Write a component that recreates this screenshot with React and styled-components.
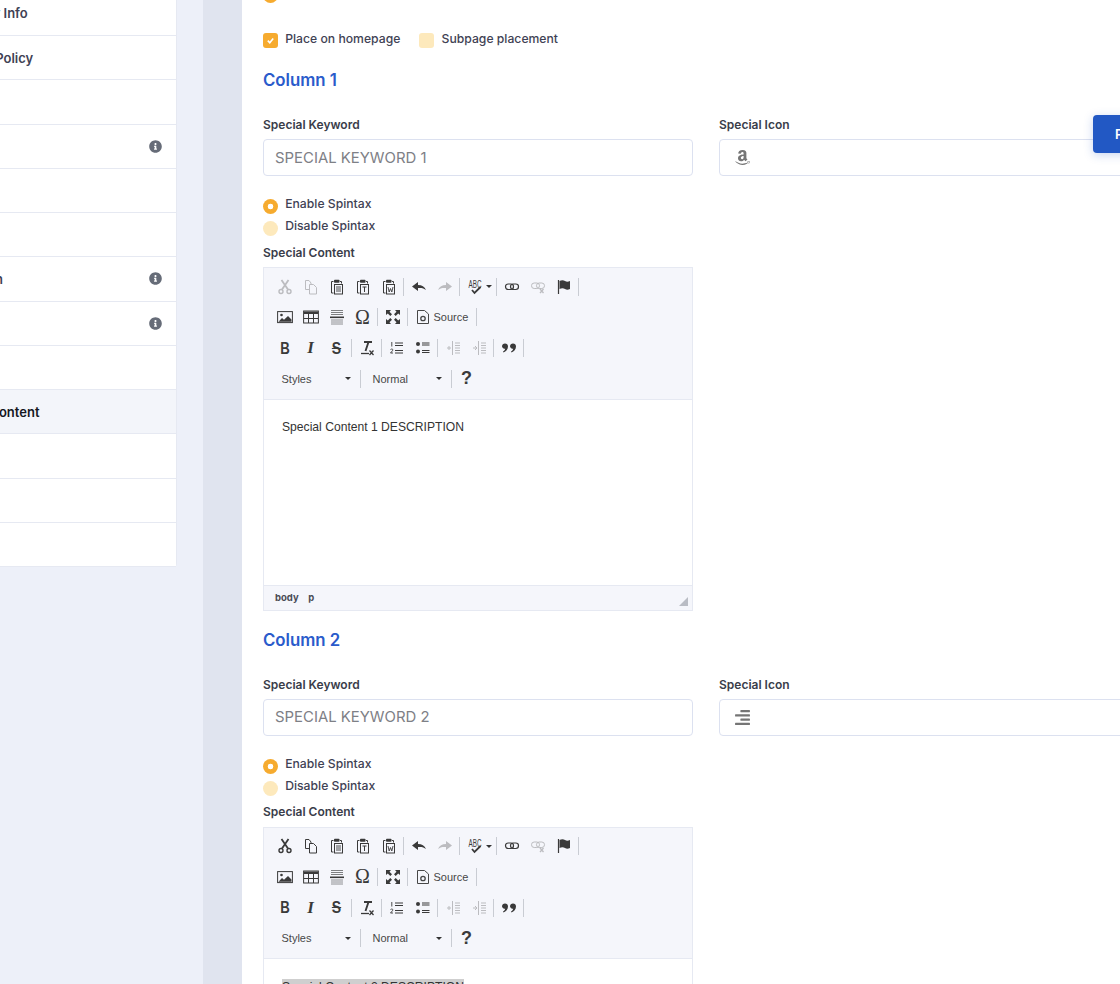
import React from 'react';
import styled, { createGlobalStyle } from 'styled-components';
import { FaAmazon, FaAlignRight, FaInfoCircle } from 'react-icons/fa';

const GlobalStyle = createGlobalStyle`
  html, body { margin: 0; padding: 0; background: #edf0f9; }
  body { font-family: Inter, "Noto Sans", sans-serif; }
  * { box-sizing: border-box; }
`;

const line = { fill: 'none', stroke: 'currentColor', strokeWidth: 1 };

const clipboard = (
  <>
    <path d="M4.500 2.500H2.500v11.500h2" {...line} />
    <path d="M11 2.500h1.500v2" {...line} />
    <rect x="5" y="0.800" width="5.500" height="3" rx="0.800" fill="currentColor" />
    <rect x="5.500" y="5.500" width="8" height="9.500" {...line} />
  </>
);

const ICONS = {
  cut: (
    <>
      <path d="M4.500 1 11 10.500M11.500 1 5 10.500" {...line} strokeWidth="1.800" />
      <circle cx="4" cy="12.500" r="2" {...line} strokeWidth="1.400" />
      <circle cx="12" cy="12.500" r="2" {...line} strokeWidth="1.400" />
    </>
  ),
  copy: (
    <>
      <path d="M6 10.500H2.500v-9h3.500l2 2.500v1" {...line} />
      <path d="M6.500 5.500h4l3 3v6.500h-7z" {...line} />
    </>
  ),
  paste: (
    <>
      {clipboard}
      <path d="M7 8h5M7 10h5M7 12h5" {...line} strokeWidth="0.900" />
    </>
  ),
  pasteText: (
    <>
      {clipboard}
      <path d="M7.500 8h4M9.500 8v5" {...line} />
    </>
  ),
  pasteWord: (
    <>
      {clipboard}
      <path d="M7 8l1.200 5 1.300-3.500L10.800 13 12 8" {...line} strokeWidth="0.900" />
    </>
  ),
  undo: <path d="M1 7.500 7 3v3c4 0 6.500 1.500 8 5-2-1.800-4.500-2.300-8-2v3z" fill="currentColor" />,
  redo: <path d="M15 7.500 9 3v3c-4 0-6.500 1.500-8 5 2-1.800 4.500-2.300 8-2v3z" fill="currentColor" />,
  link: (
    <>
      <rect x="1.500" y="5" width="8" height="5.500" rx="2.700" {...line} strokeWidth="1.200" />
      <rect x="6.500" y="5" width="8" height="5.500" rx="2.700" {...line} strokeWidth="1.200" />
    </>
  ),
  unlink: (
    <>
      <rect x="1.500" y="4" width="8" height="5.500" rx="2.700" {...line} />
      <rect x="6.500" y="4" width="8" height="5.500" rx="2.700" {...line} />
      <path d="M10 10l3.500 4M13.500 10 10 14" {...line} strokeWidth="1.300" />
    </>
  ),
  flag: (
    <>
      <path d="M2.500 1v14" {...line} strokeWidth="1.200" />
      <path d="M3.500 2c2-1 4-1 5.500 0s3 1 5 0v8c-2 1-3.500 1-5 0s-3.500-1-5.500 0z" fill="currentColor" />
    </>
  ),
  image: (
    <>
      <rect x="0.600" y="2.600" width="14.800" height="11" {...line} />
      <circle cx="4.500" cy="6" r="1.300" fill="currentColor" />
      <path d="M1.500 12.800 5 9l2 1.800L11 7l3.500 3.500v2.300z" fill="currentColor" />
    </>
  ),
  table: (
    <>
      <rect x="0.600" y="2" width="14.800" height="12" {...line} />
      <path d="M1 2.500h14v2.500H1z" fill="currentColor" />
      <path d="M5.500 5v9M10.500 5v9M1 9.500h14" {...line} />
    </>
  ),
  rule: (
    <>
      <path d="M2 1.500h12M2 3.500h12M2 5.500h12" {...line} strokeWidth="0.800" opacity="0.8" />
      <path d="M1 8.300h14" {...line} strokeWidth="1.600" />
      <path d="M2 11h12M2 13h12M2 15h12" {...line} strokeWidth="0.900" opacity="0.6" />
    </>
  ),
  maximize: (
    <path
      d="M1 1h5L4.500 2.800 7 5.300 5.300 7 2.800 4.500 1 6zM15 1v5l-1.800-1.500L10.700 7 9 5.300l2.500-2.500L10 1zM1 15v-5l1.800 1.500L5.300 9 7 10.700l-2.500 2.500L6 15zM15 15h-5l1.500-1.800L9 10.700 10.700 9l2.500 2.500L15 10z"
      fill="currentColor"
    />
  ),
  source: (
    <>
      <path d="M2.500 1.500h7l4 3.500v9.500h-11z" {...line} />
      <circle cx="8" cy="9.500" r="2.200" {...line} strokeWidth="1.300" />
    </>
  ),
  removeFormat: (
    <>
      <path d="M5 2h8M9.500 2 6.500 11" {...line} strokeWidth="1.900" />
      <path d="M2 13.500h8" {...line} strokeWidth="1.300" />
      <path d="M10.500 10.500l4 4.500M14.500 10.500l-4 4.500" {...line} strokeWidth="1.300" />
    </>
  ),
  ol: (
    <>
      <path d="M2.800 2v4.500M1.500 9.500c1.500-1 3-.3 2 1.200L1.500 13h2.500" {...line} strokeWidth="0.900" />
      <path d="M6 3h8M6 5.500h8M6 10.500h8M6 13h8" {...line} />
    </>
  ),
  ul: (
    <>
      <circle cx="3" cy="4" r="2" fill="currentColor" />
      <circle cx="3" cy="11.500" r="2" fill="currentColor" />
      <path d="M7 3h7.500M7 5h7.500M7 10.500h7.500M7 12.500h7.500" {...line} />
    </>
  ),
  outdent: (
    <>
      <path d="M7.500 1v14" {...line} />
      <path d="M10 3h5M10 5.500h5M10 8h5M10 10.500h5M10 13h5" {...line} />
      <path d="M2 8h4M4 6v4" {...line} />
    </>
  ),
  indent: (
    <>
      <path d="M7.500 1v14" {...line} />
      <path d="M10 3h5M10 5.500h5M10 8h5M10 10.500h5M10 13h5" {...line} />
      <path d="M2 8h4M4 6l2 2-2 2" {...line} />
    </>
  ),
  quote: (
    <path
      d="M4 3.500c1.800 0 3 1.200 3 3 0 3-2 5-4.500 6l-.5-1c1.300-.7 2-1.500 2.200-2.700C2.500 8.800 1 7.700 1 6.200 1 4.700 2.300 3.500 4 3.500zM12 3.500c1.800 0 3 1.200 3 3 0 3-2 5-4.500 6l-.5-1c1.300-.7 2-1.500 2.200-2.700-1.700 0-3.200-1.100-3.200-2.600C9 4.700 10.300 3.500 12 3.500z"
      fill="currentColor"
    />
  ),
};

const NAV_ITEMS = [
  { label: 'Company Info' },
  { label: 'Delivery Policy' },
  { label: 'Products' },
  { label: 'Home', info: true },
  { label: 'About' },
  { label: 'Blog' },
  { label: 'Education', info: true },
  { label: 'Gallery', info: true },
  { label: 'FAQ' },
  { label: 'Special Content', active: true },
  { label: 'Reviews' },
  { label: 'Footer' },
  { label: 'Links' },
];

const Icon = ({ name }) => (
  <svg width="16" height="16" viewBox="0 0 16 16" aria-hidden="true">
    {ICONS[name]}
  </svg>
);

const Tool = ({ name, off }) => (
  <ToolButton $off={off}>
    <Icon name={name} />
  </ToolButton>
);

const Toolbar = ({ cutOff }) => (
  <ToolbarBox>
    <ToolRow>
      <Tool name="cut" off={cutOff} />
      <Tool name="copy" off={cutOff} />
      <Tool name="paste" />
      <Tool name="pasteText" />
      <Tool name="pasteWord" />
      <Separator />
      <Tool name="undo" />
      <Tool name="redo" off />
      <Separator />
      <SpellButton>
        <svg viewBox="0 0 16 16" width="16" height="16" aria-hidden="true">
          <text x="0.500" y="8.500" fontSize="10" textLength="13" lengthAdjust="spacingAndGlyphs" fontFamily="Liberation Sans, sans-serif" fill="currentColor">ABC</text>
          <path d="M4 11l2.500 3 6-6" fill="none" stroke="currentColor" strokeWidth="1.800" />
        </svg>
        <Caret />
      </SpellButton>
      <Separator />
      <Tool name="link" />
      <Tool name="unlink" off />
      <Tool name="flag" />
      <Separator />
    </ToolRow>
    <ToolRow>
      <Tool name="image" />
      <Tool name="table" />
      <Tool name="rule" />
      <ToolButton><OmegaGlyph>Ω</OmegaGlyph></ToolButton>
      <Separator />
      <Tool name="maximize" />
      <Separator />
      <SourceButton>
        <Icon name="source" />
        <span>Source</span>
      </SourceButton>
      <Separator />
    </ToolRow>
    <ToolRow>
      <ToolButton><BoldGlyph>B</BoldGlyph></ToolButton>
      <ToolButton><ItalicGlyph>I</ItalicGlyph></ToolButton>
      <ToolButton><StrikeGlyph>S</StrikeGlyph></ToolButton>
      <Separator />
      <Tool name="removeFormat" />
      <Separator />
      <Tool name="ol" />
      <Tool name="ul" />
      <Separator />
      <Tool name="outdent" off />
      <Tool name="indent" off />
      <Separator />
      <Tool name="quote" />
      <Separator />
    </ToolRow>
    <ToolRow>
      <Combo><span>Styles</span><Caret /></Combo>
      <Separator />
      <Combo><span>Normal</span><Caret /></Combo>
      <Separator />
      <ToolButton><HelpGlyph>?</HelpGlyph></ToolButton>
    </ToolRow>
  </ToolbarBox>
);

const Radio = ({ checked, children }) => (
  <OptionLabel>
    <RadioDot $checked={checked} />
    <OptionText $lift={3}>{children}</OptionText>
  </OptionLabel>
);

const Check = ({ checked, children }) => (
  <OptionLabel>
    <CheckBox $checked={checked}>
      {checked && (
        <svg width="9" height="9" viewBox="0 0 10 10" aria-hidden="true">
          <path d="M2 5.200 4.200 7.500 8 2.800" fill="none" stroke="#fff" strokeWidth="1.800" />
        </svg>
      )}
    </CheckBox>
    <OptionText $lift={2.5}>{children}</OptionText>
  </OptionLabel>
);

const ColumnBlock = ({ n, icon, cutOff, selected }) => (
  <section>
    <ColumnTitle>Column {n}</ColumnTitle>
    <FieldGrid>
      <div>
        <FieldLabel>Special Keyword</FieldLabel>
        <TextInput readOnly value={`SPECIAL KEYWORD ${n}`} />
      </div>
      <div>
        <FieldLabel>Special Icon</FieldLabel>
        <IconInput>{icon}</IconInput>
      </div>
    </FieldGrid>
    <RadioGroup>
      <Radio checked>Enable Spintax</Radio>
      <Radio>Disable Spintax</Radio>
    </RadioGroup>
    <FieldLabel>Special Content</FieldLabel>
    <Editor>
      <Toolbar cutOff={cutOff} />
      <EditArea>
        <EditText $selected={selected}>Special Content {n} DESCRIPTION</EditText>
      </EditArea>
      <StatusBar>
        <PathItem>body</PathItem>
        <PathItem>p</PathItem>
        <ResizeGrip />
      </StatusBar>
    </Editor>
  </section>
);

export default function App() {
  return (
    <Page>
      <GlobalStyle />
      <Sidebar>
        {NAV_ITEMS.map((item) => (
          <NavItem key={item.label} $active={item.active}>
            <span>{item.label}</span>
            {item.info && <InfoIcon />}
          </NavItem>
        ))}
      </Sidebar>
      <Main>
        <Panel>
          <TopRadio><RadioDot $checked /></TopRadio>
          <PlacementRow>
            <Check checked>Place on homepage</Check>
            <Check>Subpage placement</Check>
          </PlacementRow>
          <ColumnBlock n={1} icon={<FaAmazon />} cutOff />
          <ColumnBlock n={2} icon={<FaAlignRight />} selected />
          <PublishButton>Publish</PublishButton>
        </Panel>
      </Main>
    </Page>
  );
}

const Page = styled.div`
  display: flex;
  width: 1120px;
  height: 984px;
  overflow: hidden;
  background: #edf0f9;
`;

const Sidebar = styled.nav`
  flex: none;
  align-self: flex-start;
  width: 257px;
  margin: -8.250px 26px 0 -80px;
  background: #fff;
  border-right: 1px solid #e6e9f2;
  border-bottom-right-radius: 4px;
`;

const NavItem = styled.div`
  display: flex;
  align-items: center;
  justify-content: space-between;
  height: 44.250px;
  padding: 0 14px 0 20px;
  font-size: 13px;
  font-weight: 600;
  color: ${(p) => (p.$active ? '#15171f' : '#3f4254')};
  background: ${(p) => (p.$active ? '#f3f5fa' : '#fff')};
  border-bottom: 1px solid #e6e9f2;
`;

const InfoIcon = styled(FaInfoCircle)`
  width: 13px;
  height: 13px;
  color: #666c78;
`;

const Main = styled.main`
  flex: none;
  width: 917px;
  padding-left: 39px;
  background: #e0e4ef;
`;

const Panel = styled.div`
  position: relative;
  display: flow-root;
  height: 984px;
  padding-left: 21px;
  background: #fff;
`;

const TopRadio = styled.div`
  margin-top: -12px;
  height: 15px;
`;

const PlacementRow = styled.div`
  display: flex;
  gap: 19px;
  margin: 30px 0 22px;
`;

const OptionLabel = styled.label`
  display: flex;
  gap: 7.200px;
  font-size: 12.200px;
  font-weight: 500;
  line-height: 15px;
  color: #3f4254;
`;

const OptionText = styled.span`
  margin-top: ${(p) => -p.$lift}px;
`;

const CheckBox = styled.span`
  display: flex;
  flex: none;
  align-items: center;
  justify-content: center;
  width: 15px;
  height: 15px;
  border-radius: 3px;
  background: ${(p) => (p.$checked ? '#f6ab2f' : '#fde9bc')};
`;

const RadioDot = styled.span`
  display: block;
  flex: none;
  width: 15px;
  height: 15px;
  border-radius: 50%;
  background: ${(p) => (p.$checked ? 'radial-gradient(circle, #fff 0 2.600px, #f6ab2f 3.100px)' : '#fde9bc')};
`;

const ColumnTitle = styled.h2`
  margin: 18.500px 0 27px;
  font-size: 16.800px;
  font-weight: 600;
  line-height: 20px;
  color: #2a5bcb;
`;

const FieldGrid = styled.div`
  display: grid;
  grid-template-columns: 430px 430px;
  gap: 26px;
`;

const FieldLabel = styled.div`
  height: 15px;
  margin-bottom: 7px;
  font-size: 12px;
  font-weight: 600;
  line-height: 15px;
  color: #3a3d4a;
`;

const TextInput = styled.input`
  display: block;
  width: 100%;
  height: 37px;
  padding: 0 11px;
  border: 1px solid #dce1f0;
  border-radius: 4px;
  outline: none;
  font-family: inherit;
  font-size: 14.900px;
  color: #7e8086;
`;

const IconInput = styled.div`
  display: flex;
  align-items: center;
  height: 37px;
  padding-left: 14px;
  border: 1px solid #dce1f0;
  border-radius: 4px;
  font-size: 17px;
  color: #757575;
`;

const RadioGroup = styled.div`
  display: flex;
  flex-direction: column;
  gap: 7px;
  margin: 23px 0 8.500px;
`;

const Editor = styled.div`
  display: flex;
  flex-direction: column;
  width: 430px;
  height: 344px;
  margin-top: 7.500px;
  border: 1px solid #e6e9f2;
`;

const ToolbarBox = styled.div`
  flex: none;
  height: 131.500px;
  padding: 6.900px 0 0 7.500px;
  background: #f5f6fb;
  border-bottom: 1px solid #e6e9f2;
`;

const ToolRow = styled.div`
  display: flex;
  align-items: center;
  height: 24px;
  margin-bottom: 6.600px;
  color: #3a3a3a;
`;

const ToolButton = styled.span`
  display: flex;
  flex: none;
  align-items: center;
  justify-content: center;
  width: 26px;
  height: 24px;
  opacity: ${(p) => (p.$off ? 0.3 : 1)};
`;

const Separator = styled.span`
  flex: none;
  width: 4px;
  height: 18px;
  background: linear-gradient(#c9ccd3, #c9ccd3) center / 1px 100% no-repeat;
`;

const SpellButton = styled.span`
  display: flex;
  flex: none;
  align-items: center;
  gap: 2px;
  width: 33px;
  height: 24px;
  padding-left: 6px;
`;

const Caret = styled.i`
  flex: none;
  width: 0;
  height: 0;
  border-left: 3px solid transparent;
  border-right: 3px solid transparent;
  border-top: 3px solid #333;
`;

const SourceButton = styled.span`
  display: flex;
  flex: none;
  align-items: center;
  gap: 3px;
  width: 65px;
  height: 24px;
  padding-left: 5px;
  font-family: "Liberation Sans", Arial, sans-serif;
  font-size: 11px;
  color: #474747;
`;

const BoldGlyph = styled.b`
  font-family: "Liberation Sans", Arial, sans-serif;
  font-size: 16.500px;
  font-weight: 700;
  transform: scaleX(0.8);
`;

const ItalicGlyph = styled.i`
  font-family: "Liberation Serif", serif;
  font-size: 17px;
  font-weight: 700;
`;

const StrikeGlyph = styled.s`
  font-family: "Liberation Sans", Arial, sans-serif;
  font-size: 16.500px;
  font-weight: 700;
  transform: scaleX(0.85);
`;

const OmegaGlyph = styled.span`
  font-family: "Liberation Serif", serif;
  font-size: 20px;
  font-weight: 400;
`;

const HelpGlyph = styled.span`
  font-family: "Liberation Sans", Arial, sans-serif;
  font-size: 18px;
  font-weight: 700;
`;

const Combo = styled.span`
  display: flex;
  flex: none;
  align-items: center;
  justify-content: space-between;
  width: 87px;
  height: 24px;
  padding: 0 8px 0 10px;
  font-family: "Liberation Sans", Arial, sans-serif;
  font-size: 11px;
  color: #484848;
`;

const EditArea = styled.div`
  flex: 1;
  padding: 19.500px 18px 0;
  background: #fff;
  overflow: hidden;
`;

const EditText = styled.p`
  margin: 0;
  font-family: "Liberation Sans", Arial, sans-serif;
  font-size: 12.130px;
  line-height: 16px;
  color: #333;
  background: ${(p) => (p.$selected ? 'linear-gradient(#cfcfcf, #cfcfcf) left top / 182px 16px no-repeat' : 'none')};
`;

const StatusBar = styled.div`
  position: relative;
  display: flex;
  flex: none;
  align-items: center;
  gap: 9.500px;
  height: 25px;
  padding: 0 0 1px 11px;
  background: #f5f6fb;
  border-top: 1px solid #e6e9f2;
`;

const PathItem = styled.span`
  font-size: 9.500px;
  font-weight: 700;
  color: #4a4c55;
`;

const ResizeGrip = styled.i`
  position: absolute;
  right: 4px;
  bottom: 4px;
  width: 0;
  height: 0;
  border-left: 9px solid transparent;
  border-bottom: 9px solid #b9bcc4;
`;

const PublishButton = styled.button`
  position: absolute;
  top: 115px;
  left: 851px;
  width: 90px;
  height: 38px;
  padding: 0 0 0 22px;
  border: 0;
  border-radius: 4px;
  background: #2258c4;
  box-shadow: 0 2px 10px rgba(34, 88, 196, 0.25);
  font-family: inherit;
  font-size: 13px;
  font-weight: 600;
  text-align: left;
  color: #fff;
`;
